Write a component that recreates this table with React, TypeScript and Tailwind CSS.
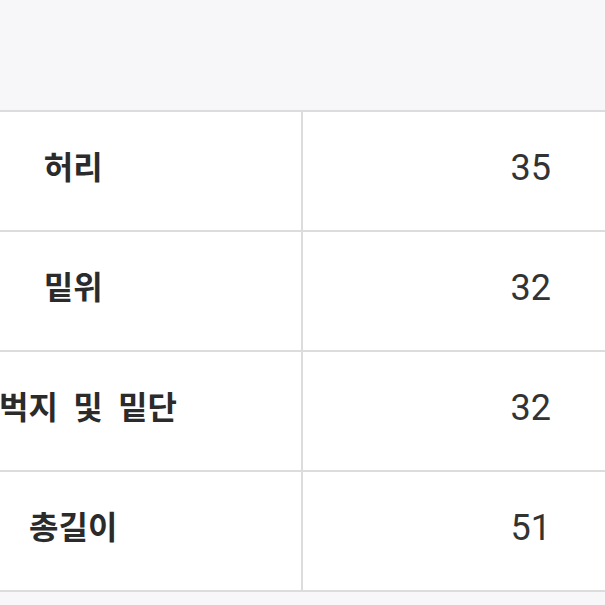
import React from "react";

const rows = [
  { label: "허리", value: "35" },
  { label: "밑위", value: "32" },
  { label: "허벅지 및 밑단", value: "32" },
  { label: "총길이", value: "51" },
];

export default function App() {
  return (
    <div className="w-[605px] h-[605px] overflow-hidden bg-[#f7f7f9]">
      <div className="h-[110px]" />
      <div className="ml-[-154px] w-[913px] bg-white border-t-2 border-[#dcdcdc]">
        {rows.map((r) => (
          <div key={r.label} className="grid grid-cols-2 h-[120px] border-b-2 border-[#dcdcdc]">
            <div className="flex items-center justify-center border-r-2 border-[#dcdcdc] pb-[12px]">
              <span
                className="text-[32px] font-bold text-[#2b2b2b] whitespace-nowrap [word-spacing:8px]"
                style={{ fontFamily: '"Noto Sans CJK KR", "Noto Sans", sans-serif' }}
              >
                {r.label}
              </span>
            </div>
            <div className="flex items-center justify-center pb-[6px]">
              <span
                className="text-[36px] text-[#333333]"
                style={{ fontFamily: 'Roboto, "Noto Sans", sans-serif' }}
              >
                {r.value}
              </span>
            </div>
          </div>
        ))}
      </div>
    </div>
  );
}
